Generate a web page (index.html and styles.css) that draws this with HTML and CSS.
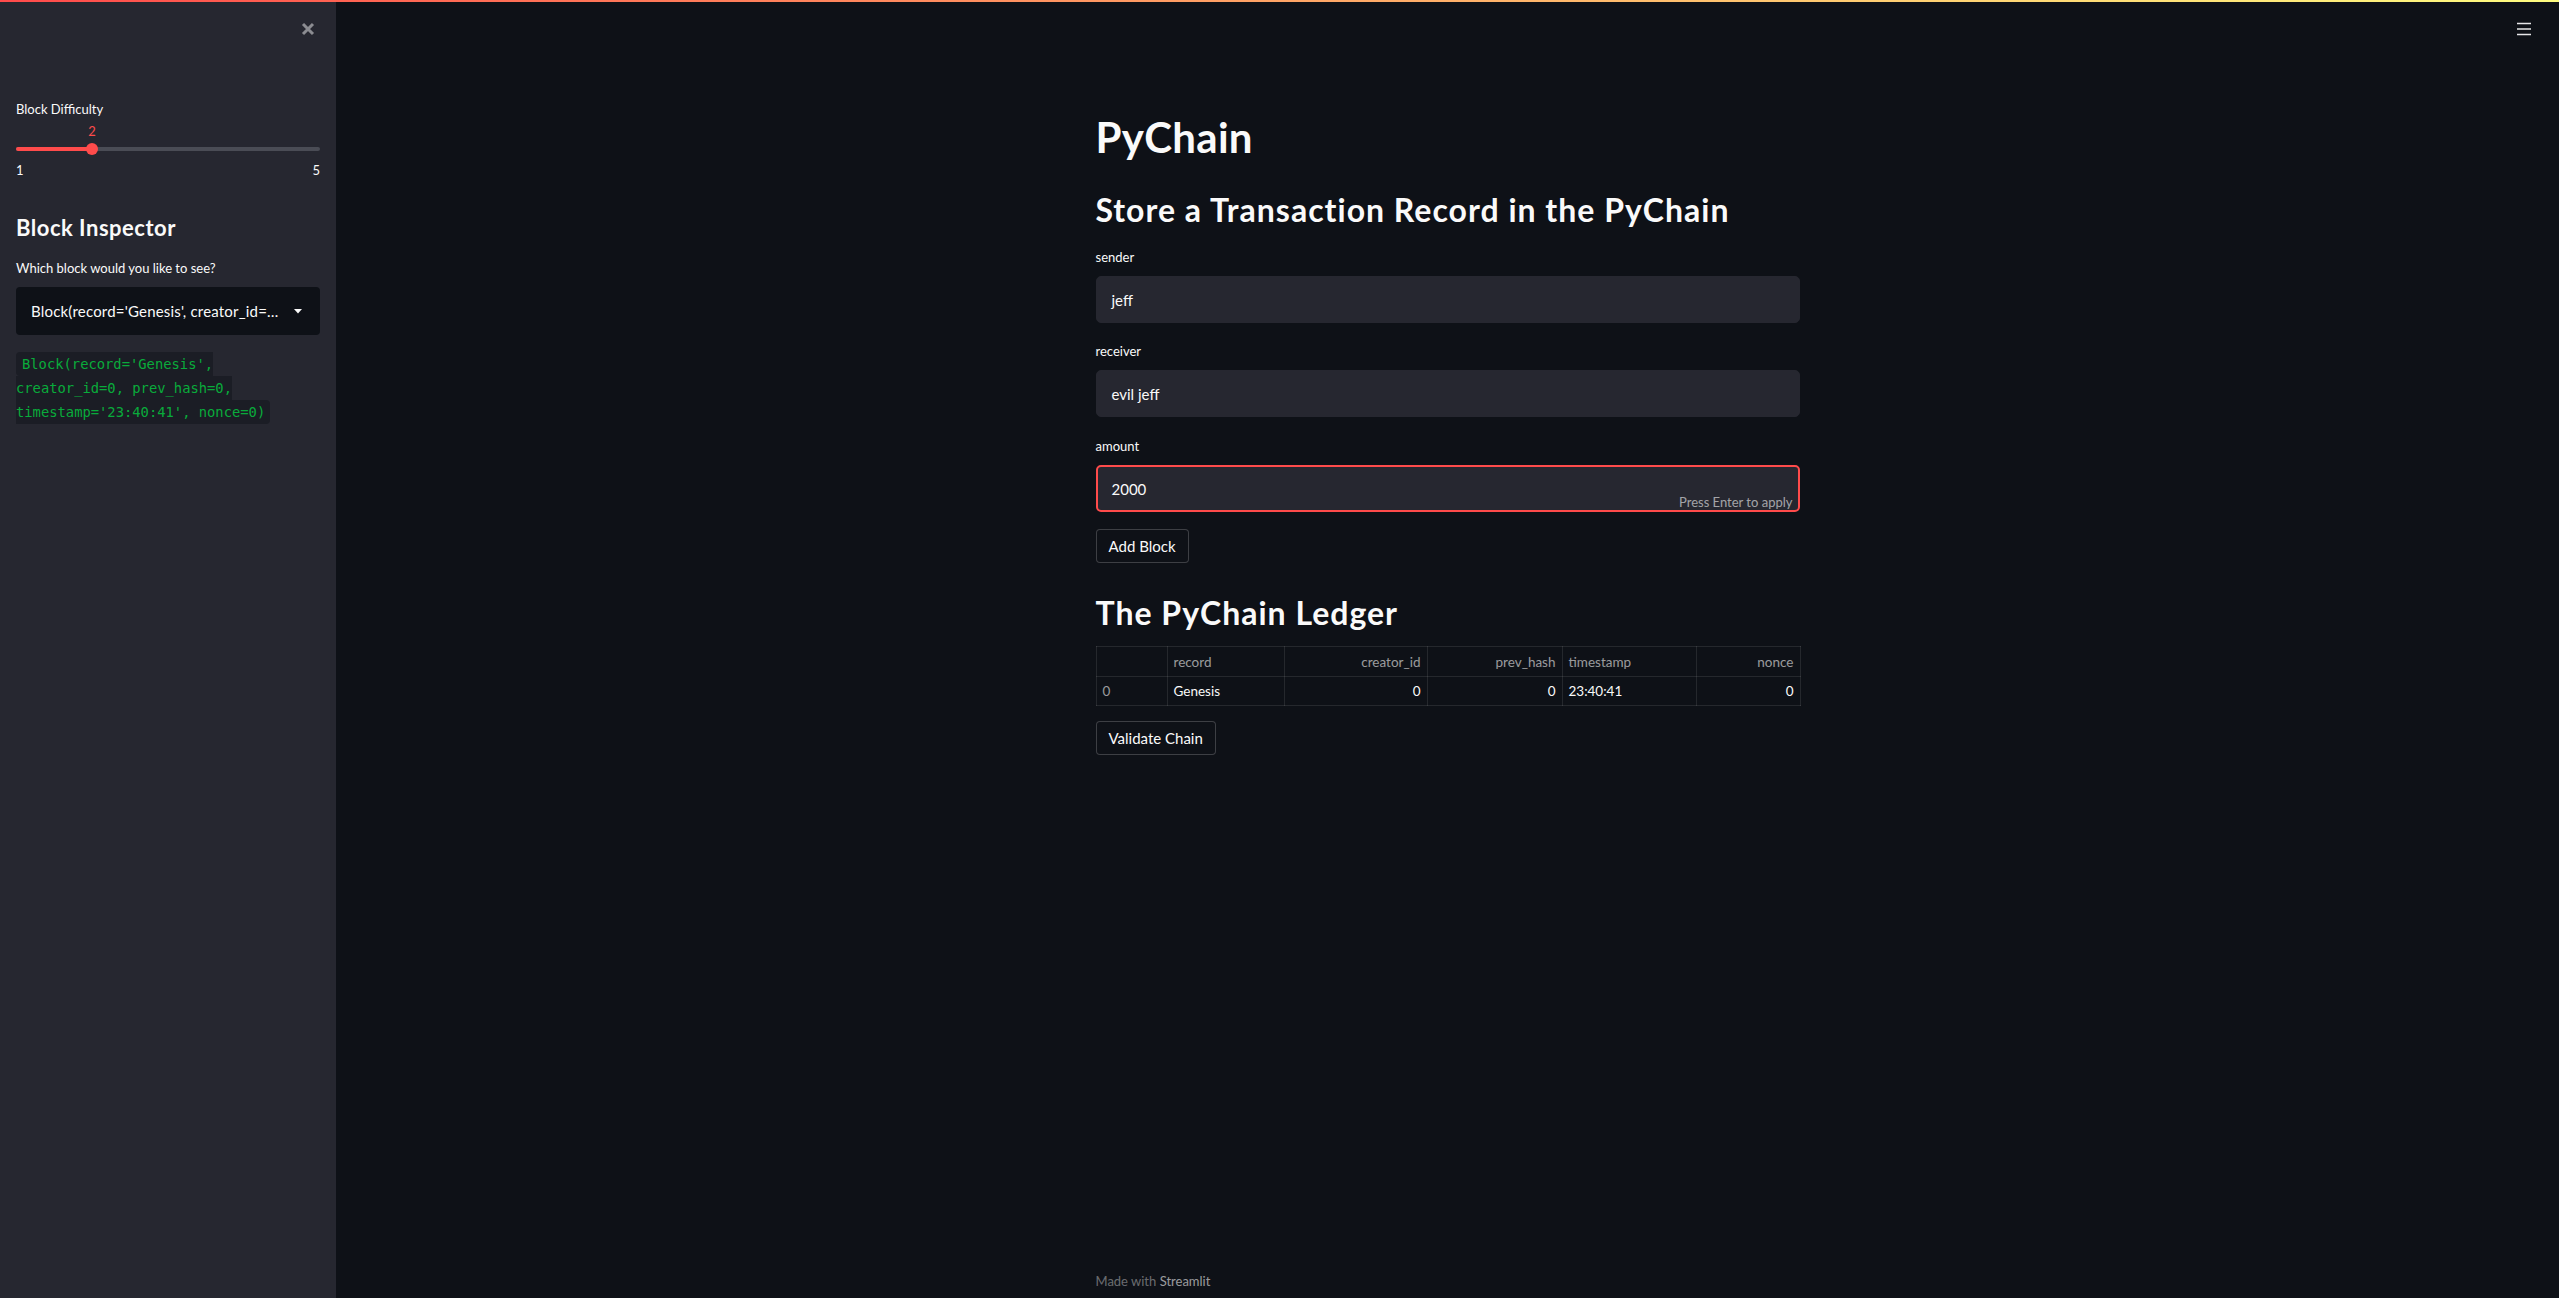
FILE: index.html
```html
<!DOCTYPE html>
<html lang="en">
<head>
<meta charset="utf-8">
<title>PyChain</title>
<link rel="stylesheet" href="styles.css">
</head>
<body>
<div class="decoration"></div>
<div class="app">
  <aside class="sidebar">
    <div class="sidebar-top">
      <svg class="close-icon" width="14" height="14" viewBox="0 0 14 14"><path d="M2 2 L12 12 M12 2 L2 12" stroke="#8b8c91" stroke-width="3" stroke-linecap="butt"/></svg>
    </div>
    <div class="widget-label slider-label">Block Difficulty</div>
    <div class="slider">
      <div class="slider-value-row">
        <span class="slider-value" style="left:25%">2</span>
      </div>
      <div class="slider-track-area">
        <div class="slider-track">
          <div class="slider-fill" style="width:25%"></div>
          <div class="slider-thumb" style="left:25%"></div>
        </div>
      </div>
      <div class="slider-minmax"><span>1</span><span>5</span></div>
    </div>
    <h2 class="side-h2">Block Inspector</h2>
    <div class="widget-label select-label">Which block would you like to see?</div>
    <div class="select">
      <span class="select-text">Block(record='Genesis', creator_id=…</span>
      <svg class="caret" width="8" height="5" viewBox="0 0 8 5"><path d="M0 0 L8 0 L4 4.5 Z" fill="#fafafa"/></svg>
    </div>
    <p class="code-para"><code class="inline-code">Block(record='Genesis', creator_id=0, prev_hash=0, timestamp='23:40:41', nonce=0)</code></p>
  </aside>
  <main class="main">
    <div class="topbar">
      <svg class="menu-icon" width="14" height="14" viewBox="0 0 14 14"><path d="M0 1.5 H14 M0 7 H14 M0 12.5 H14" stroke="#e6e6e8" stroke-width="1.6"/></svg>
    </div>
    <div class="block">
      <h1 class="title">PyChain</h1>
      <h2 class="h2 store-h2">Store a Transaction Record in the PyChain</h2>
      <div class="field">
        <div class="widget-label">sender</div>
        <div class="input">jeff</div>
      </div>
      <div class="field">
        <div class="widget-label">receiver</div>
        <div class="input">evil jeff</div>
      </div>
      <div class="field">
        <div class="widget-label">amount</div>
        <div class="input input-focus">2000<span class="hint">Press Enter to apply</span></div>
      </div>
      <button class="btn add-btn">Add Block</button>
      <h2 class="h2 ledger-h2">The PyChain Ledger</h2>
      <table class="df">
        <colgroup>
          <col class="c-idx"><col class="c-rec"><col class="c-cre"><col class="c-prev"><col class="c-ts"><col class="c-non">
        </colgroup>
        <thead>
          <tr><th></th><th class="l">record</th><th class="r">creator_id</th><th class="r">prev_hash</th><th class="l">timestamp</th><th class="r">nonce</th></tr>
        </thead>
        <tbody>
          <tr><td class="idx">0</td><td class="l">Genesis</td><td class="r">0</td><td class="r">0</td><td class="l">23:40:41</td><td class="r">0</td></tr>
        </tbody>
      </table>
      <button class="btn validate-btn">Validate Chain</button>
    </div>
    <footer class="footer">
      <span class="made">Made with </span><span class="brand">Streamlit</span>
    </footer>
  </main>
</div>
</body>
</html>
```
FILE: styles.css
```css
html, body {
  margin: 0;
  padding: 0;
}
body {
  background: #0e1117;
  color: #fafafa;
  font-family: Lato, "Noto Sans", sans-serif;
  overflow: hidden;
}
.decoration {
  position: fixed;
  top: 0;
  left: 0;
  right: 0;
  height: 2px;
  background: linear-gradient(90deg, #ff4b4b, #fffd80);
  z-index: 10;
}
.app {
  display: flex;
  height: 1298px;
}

/* Sidebar */
.sidebar {
  width: 336px;
  flex: none;
  box-sizing: border-box;
  background: #262730;
  padding: 0 16px;
}
.sidebar-top {
  height: 58px;
  display: flex;
  align-items: center;
  justify-content: flex-end;
  padding-right: 5px;
}
.close-icon { display: block; }
.widget-label {
  font-size: 13px;
  line-height: 16px;
  height: 16px;
  color: #fafafa;
}
.slider-label { margin-top: 43px; }
.slider { position: relative; }
.slider-value-row {
  position: relative;
  height: 16px;
  margin-top: 6px;
}
.slider-value {
  position: absolute;
  top: 0;
  transform: translateX(-50%);
  color: #ff4b4b;
  font-size: 13px;
  line-height: 16px;
}
.slider-track-area {
  height: 20px;
  display: flex;
  align-items: center;
}
.slider-track {
  position: relative;
  width: 100%;
  height: 4px;
  border-radius: 2px;
  background: #4a4c55;
}
.slider-fill {
  height: 4px;
  border-radius: 2px;
  background: #ff4b4b;
}
.slider-thumb {
  position: absolute;
  top: -4px;
  width: 12px;
  height: 12px;
  margin-left: -6px;
  border-radius: 50%;
  background: #ff4b4b;
}
.slider-minmax {
  display: flex;
  justify-content: space-between;
  margin-top: 3px;
  font-size: 13px;
  line-height: 16px;
  color: #fafafa;
}
.side-h2 {
  margin: 37px 0 0;
  font-size: 22px;
  line-height: 1.2;
  font-weight: 700;
  letter-spacing: 0.5px;
}
.select-label { margin-top: 19px; }
.select {
  margin-top: 11px;
  height: 48px;
  box-sizing: border-box;
  background: #0e1117;
  border-radius: 4px;
  display: flex;
  align-items: center;
  padding: 0 15px;
  justify-content: space-between;
}
.select-text {
  font-size: 15px;
  line-height: 18px;
  letter-spacing: 0.2px;
  white-space: nowrap;
}
.caret { display: block; margin-right: 3px; }
.code-para {
  margin: 17px 0 0;
  line-height: 24px;
  font-size: 13.8px;
}
.inline-code {
  font-family: "DejaVu Sans Mono", "Liberation Mono", monospace;
  font-size: 13.8px;
  color: #09ab3b;
  background: #1b1d25;
  padding: 4px 5px 4px 6px;
  border-radius: 4px;
}

/* Main */
.main {
  flex: 1;
  display: flex;
  flex-direction: column;
  min-width: 0;
}
.topbar {
  height: 58px;
  flex: none;
  display: flex;
  align-items: center;
  justify-content: flex-end;
  padding-right: 28px;
}
.menu-icon { display: block; }
.block {
  width: 704px;
  margin: 0 auto;
}
.title {
  margin: 53.5px 0 0;
  font-size: 42px;
  line-height: 1.2;
  font-weight: 700;
  letter-spacing: 0.3px;
}
.h2 {
  font-size: 32px;
  line-height: 1.2;
  font-weight: 700;
  letter-spacing: 1px;
}
.store-h2 { margin: 29.5px 0 0; }
.field { margin-top: 20.5px; }
.store-h2 + .field { margin-top: 19.2px; }
.field .widget-label { margin-bottom: 11px; }
.input {
  position: relative;
  height: 47px;
  box-sizing: border-box;
  background: #262730;
  border: 1px solid #262730;
  border-radius: 5px;
  padding: 1px 15px 0;
  display: flex;
  align-items: center;
  font-size: 15px;
}
.input-focus {
  border: 2px solid #ff4b4b;
  padding: 1px 14px 0;
}
.hint {
  position: absolute;
  right: 5px;
  bottom: 1px;
  font-size: 13px;
  line-height: 14px;
  color: rgba(250, 250, 250, 0.6);
}
.btn {
  display: block;
  height: 34px;
  box-sizing: border-box;
  padding: 0 12px;
  background: #0e1117;
  color: #fafafa;
  border: 1px solid rgba(250, 250, 250, 0.2);
  border-radius: 4px;
  font-family: Lato, "Noto Sans", sans-serif;
  font-size: 15px;
}
.add-btn { margin-top: 17px; }
.ledger-h2 { margin: 31px 0 0; }
.df {
  margin-top: 13.6px;
  width: 704px;
  table-layout: fixed;
  border-collapse: collapse;
  font-size: 13.5px;
}
.c-idx { width: 71px; }
.c-rec { width: 117px; }
.c-cre { width: 143px; }
.c-prev { width: 135px; }
.c-ts { width: 134px; }
.c-non { width: 104px; }
.df th, .df td {
  border: 1px solid rgba(250, 250, 250, 0.1);
  padding: 1px 6px 0;
  white-space: nowrap;
  overflow: hidden;
  font-weight: 400;
}
.df th {
  height: 28px;
  color: rgba(250, 250, 250, 0.6);
}
.df td {
  height: 27px;
  color: #fafafa;
}
.df .l { text-align: left; }
.df .r { text-align: right; }
.df .idx { color: rgba(250, 250, 250, 0.6); text-align: left; }
.validate-btn { margin-top: 15px; }
.footer {
  margin-top: auto;
  width: 704px;
  align-self: center;
  padding-bottom: 9px;
  font-size: 13px;
  line-height: 16px;
}
.made { color: rgba(250, 250, 250, 0.4); }
.brand { color: rgba(250, 250, 250, 0.6); }
```
